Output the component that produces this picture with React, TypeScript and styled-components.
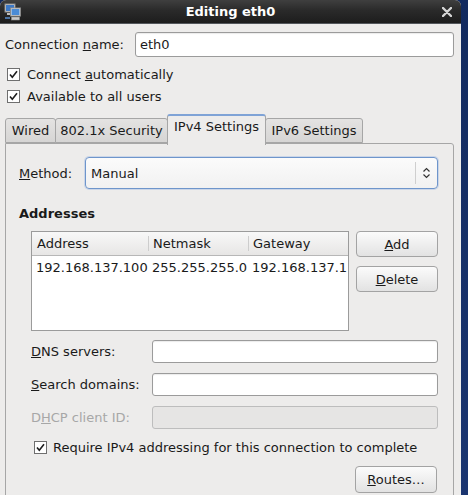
import styled, { createGlobalStyle } from 'styled-components'

const GlobalStyle = createGlobalStyle`
  html, body {
    margin: 0;
    padding: 0;
  }
  body {
    font-family: 'DejaVu Sans', 'Liberation Sans', sans-serif;
    font-size: 13px;
    color: #1a1a1a;
  }
`

const Desktop = styled.div`
  width: 468px;
  height: 495px;
  overflow: hidden;
  background: linear-gradient(180deg, #122a5e 0%, #1a3570 100%);
  display: flex;
`

const Window = styled.div`
  width: 461px;
  height: 520px;
  flex-shrink: 0;
  background: #edeceb;
  border-radius: 6px 6px 0 0;
  overflow: hidden;
  display: flex;
  flex-direction: column;
`

const TitleBar = styled.div`
  height: 24px;
  flex-shrink: 0;
  background: linear-gradient(180deg, #3f3f3f 0%, #2a2a2a 45%, #1d1d1d 100%);
  border-bottom: 1px solid #53575c;
  display: grid;
  grid-template-columns: 40px 1fr 40px;
  align-items: center;
  box-sizing: border-box;
`

const Title = styled.div`
  text-align: center;
  color: #ffffff;
  font-weight: bold;
  font-size: 13px;
`

const IconSlot = styled.div<{ $right?: boolean }>`
  display: flex;
  justify-content: ${p => (p.$right ? 'flex-end' : 'flex-start')};
  padding: ${p => (p.$right ? '0 9px 0 0' : '0 0 0 4px')};
  align-items: center;
`

const Body = styled.div`
  padding: 8px 7px 0 5px;
  display: flex;
  flex-direction: column;
`

const NameRow = styled.div`
  display: flex;
  align-items: center;
  height: 25px;
`

const NameLabel = styled.label`
  width: 130px;
`

const Entry = styled.div<{ $width: number; $height?: number; $disabled?: boolean }>`
  width: ${p => p.$width}px;
  height: ${p => p.$height ?? 23}px;
  box-sizing: border-box;
  border: 1px solid ${p => (p.$disabled ? '#bdbdbd' : '#9b9b9b')};
  border-radius: 3px;
  background: ${p => (p.$disabled ? '#e6e5e4' : '#ffffff')};
  box-shadow: ${p => (p.$disabled ? 'none' : 'inset 0 1px 1px rgba(0,0,0,0.08)')};
  display: flex;
  align-items: center;
  padding-left: 4px;
`

const CheckRow = styled.div<{ $indent: number; $gap: number }>`
  display: flex;
  align-items: center;
  height: 22px;
  padding-left: ${p => p.$indent}px;
  gap: ${p => p.$gap}px;
`

const Tabs = styled.div`
  display: flex;
  align-items: flex-end;
  height: 29px;
  margin-top: 7px;
  position: relative;
  z-index: 1;
`

const Tab = styled.div<{ $active?: boolean; $width: number }>`
  width: ${p => p.$width}px;
  box-sizing: border-box;
  height: ${p => (p.$active ? 31 : 25)}px;
  margin-bottom: ${p => (p.$active ? -2 : 0)}px;
  margin-left: -1px;
  border: 1px solid #a6a6a6;
  border-bottom: ${p => (p.$active ? 'none' : '1px solid #a6a6a6')};
  border-top: ${p => (p.$active ? '2px solid #7fa3d6' : '1px solid #a6a6a6')};
  border-radius: 3px 3px 0 0;
  background: ${p =>
    p.$active ? '#edeceb' : 'linear-gradient(180deg, #e4e3e2 0%, #d6d5d4 100%)'};
  display: flex;
  align-items: ${p => (p.$active ? 'flex-start' : 'center')};
  justify-content: center;
  padding-top: ${p => (p.$active ? 3 : 0)}px;
  &:first-child {
    margin-left: 0;
  }
`

const Panel = styled.div`
  width: 449px;
  height: 370px;
  box-sizing: border-box;
  border: 1px solid #a6a6a6;
  border-radius: 0 3px 0 0;
  padding: 13px 15px 0 13px;
  display: flex;
  flex-direction: column;
`

const MethodRow = styled.div`
  display: flex;
  align-items: center;
`

const MethodLabel = styled.label`
  width: 66px;
`

const Combo = styled.div`
  width: 353px;
  height: 32px;
  box-sizing: border-box;
  border: 1px solid #6e95cb;
  border-radius: 4px;
  box-shadow: 0 0 0 1px rgba(140, 175, 225, 0.35);
  background: linear-gradient(180deg, #fbfbfb 0%, #f1f1f1 100%);
  display: flex;
  align-items: center;
  padding-left: 5px;
  padding-right: 6px;
`

const ComboText = styled.span`
  flex: 1;
`

const ComboSep = styled.div`
  width: 1px;
  height: 22px;
  background: #cfcfcf;
  margin-right: 6px;
`

const SectionTitle = styled.div`
  font-weight: bold;
  margin-top: 17px;
  height: 16px;
  line-height: 16px;
`

const AddressArea = styled.div`
  display: flex;
  margin-top: 9px;
  padding-left: 12px;
  gap: 7px;
`

const Table = styled.div`
  width: 318px;
  height: 100px;
  box-sizing: border-box;
  border: 1px solid #9b9b9b;
  background: #ffffff;
`

const HeaderRow = styled.div`
  display: grid;
  grid-template-columns: 116px 100px 1fr;
  height: 23px;
  background: linear-gradient(180deg, #f8f8f8 0%, #e7e6e5 100%);
  border-bottom: 1px solid #b7b7b7;
`

const HeaderCell = styled.div<{ $sep?: boolean }>`
  display: flex;
  align-items: center;
  padding-left: 5px;
  position: relative;
  &::before {
    content: '';
    display: ${p => (p.$sep ? 'block' : 'none')};
    position: absolute;
    left: 0;
    top: 4px;
    bottom: 4px;
    width: 1px;
    background: #cdcdcd;
  }
`

const DataRow = styled.div`
  display: grid;
  grid-template-columns: 116px 100px 1fr;
  height: 23px;
`

const DataCell = styled.div`
  display: flex;
  align-items: center;
  padding-left: 4px;
  white-space: nowrap;
`

const ButtonCol = styled.div`
  display: flex;
  flex-direction: column;
  gap: 9px;
`

const Button = styled.div<{ $height?: number }>`
  width: 82px;
  height: ${p => p.$height ?? 26}px;
  box-sizing: border-box;
  border: 1px solid #a3a3a3;
  border-radius: 4px;
  background: linear-gradient(180deg, #fbfbfb 0%, #ececec 60%, #e2e2e2 100%);
  display: flex;
  align-items: center;
  justify-content: center;
`

const FieldRows = styled.div`
  margin-top: 9px;
  padding-left: 12px;
  display: flex;
  flex-direction: column;
  gap: 10px;
`

const FieldRow = styled.div<{ $disabled?: boolean }>`
  display: flex;
  align-items: center;
  color: ${p => (p.$disabled ? '#a7a7a7' : 'inherit')};
`

const FieldLabel = styled.label`
  width: 121px;
`

const FooterRow = styled.div`
  display: flex;
  justify-content: flex-end;
  margin-top: 8px;
  padding-right: 1px;
`

const Spacer = styled.div<{ $h: number }>`
  height: ${p => p.$h}px;
  flex-shrink: 0;
`

const CheckBox = () => (
  <svg width="13" height="13" viewBox="0 0 13 13">
    <rect x="0.5" y="0.5" width="12" height="12" fill="#ffffff" stroke="#6f6f6f" />
    <path d="M3 6.5 L5.3 9.3 L10 3.2" fill="none" stroke="#1e1e1e" strokeWidth="1.6" />
  </svg>
)

const NetIcon = () => (
  <svg width="18" height="18" viewBox="0 0 18 18">
    <rect x="1" y="1" width="10" height="8" fill="#d8d8d8" stroke="#8a8a8a" />
    <rect x="2" y="2" width="8" height="6" fill="#3b78c7" />
    <rect x="3" y="10" width="6" height="2" fill="#bdbdbd" />
    <rect x="6.5" y="5" width="10" height="8" fill="#e6e6e6" stroke="#8a8a8a" />
    <rect x="7.5" y="6" width="8" height="6" fill="#4a8bd6" />
    <rect x="7.5" y="14" width="8" height="3" fill="#c9c9c9" stroke="#8a8a8a" strokeWidth="0.6" />
    <path d="M1 15 H6" stroke="#5b8fd0" strokeWidth="1.5" />
  </svg>
)

const CloseIcon = () => (
  <svg width="10" height="10" viewBox="0 0 10 10">
    <path d="M1 1 L9 9 M9 1 L1 9" stroke="#d6d6d6" strokeWidth="2.4" strokeLinecap="round" />
  </svg>
)

const ComboArrow = () => (
  <svg width="9" height="14" viewBox="0 0 9 14">
    <path d="M1.5 5.5 L4.5 2.5 L7.5 5.5 M1.5 8.5 L4.5 11.5 L7.5 8.5" fill="none" stroke="#333" strokeWidth="1.2" />
  </svg>
)

export default function App() {
  return (
    <>
      <GlobalStyle />
      <Desktop>
        <Window>
          <TitleBar>
            <IconSlot>
              <NetIcon />
            </IconSlot>
            <Title>Editing eth0</Title>
            <IconSlot $right>
              <CloseIcon />
            </IconSlot>
          </TitleBar>
          <Body>
            <NameRow>
              <NameLabel>
                Connection <u>n</u>ame:
              </NameLabel>
              <Entry $width={319} $height={25}>eth0</Entry>
            </NameRow>
            <Spacer $h={6} />
            <CheckRow $indent={2} $gap={7}>
              <CheckBox />
              <span>
                Connect <u>a</u>utomatically
              </span>
            </CheckRow>
            <CheckRow $indent={2} $gap={7}>
              <CheckBox />
              <span>Available to all users</span>
            </CheckRow>
            <Tabs>
              <Tab $width={51}>Wired</Tab>
              <Tab $width={113}>802.1x Security</Tab>
              <Tab $width={99} $active>
                IPv4 Settings
              </Tab>
              <Tab $width={98}>IPv6 Settings</Tab>
            </Tabs>
            <Panel>
              <MethodRow>
                <MethodLabel>
                  <u>M</u>ethod:
                </MethodLabel>
                <Combo>
                  <ComboText>Manual</ComboText>
                  <ComboSep />
                  <ComboArrow />
                </Combo>
              </MethodRow>
              <SectionTitle>Addresses</SectionTitle>
              <AddressArea>
                <Table>
                  <HeaderRow>
                    <HeaderCell>Address</HeaderCell>
                    <HeaderCell $sep>Netmask</HeaderCell>
                    <HeaderCell $sep>Gateway</HeaderCell>
                  </HeaderRow>
                  <DataRow>
                    <DataCell>192.168.137.100</DataCell>
                    <DataCell>255.255.255.0</DataCell>
                    <DataCell>192.168.137.1</DataCell>
                  </DataRow>
                </Table>
                <ButtonCol>
                  <Button>
                    <span>
                      <u>A</u>dd
                    </span>
                  </Button>
                  <Button>
                    <span>
                      <u>D</u>elete
                    </span>
                  </Button>
                </ButtonCol>
              </AddressArea>
              <FieldRows>
                <FieldRow>
                  <FieldLabel>
                    <u>D</u>NS servers:
                  </FieldLabel>
                  <Entry $width={286} />
                </FieldRow>
                <FieldRow>
                  <FieldLabel>
                    <u>S</u>earch domains:
                  </FieldLabel>
                  <Entry $width={286} />
                </FieldRow>
                <FieldRow $disabled>
                  <FieldLabel>
                    D<u>H</u>CP client ID:
                  </FieldLabel>
                  <Entry $width={286} $disabled />
                </FieldRow>
              </FieldRows>
              <Spacer $h={7} />
              <CheckRow $indent={15} $gap={6}>
                <CheckBox />
                <span>Require IPv4 addressing for this connection to complete</span>
              </CheckRow>
              <FooterRow>
                <Button $height={27}>
                  <span>
                    <u>R</u>outes…
                  </span>
                </Button>
              </FooterRow>
            </Panel>
          </Body>
        </Window>
      </Desktop>
    </>
  )
}
